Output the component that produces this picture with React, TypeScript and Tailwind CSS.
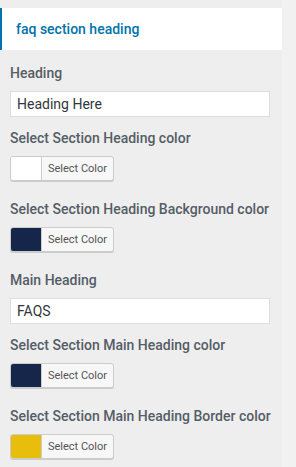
import React from 'react';

type Field =
  | { kind: 'text'; label: string; value: string }
  | { kind: 'color'; label: string; color: string };

const fields: Field[] = [
  { kind: 'text', label: 'Heading', value: 'Heading Here' },
  { kind: 'color', label: 'Select Section Heading color', color: '#ffffff' },
  { kind: 'color', label: 'Select Section Heading Background color', color: '#16264a' },
  { kind: 'text', label: 'Main Heading', value: 'FAQS' },
  { kind: 'color', label: 'Select Section Main Heading color', color: '#16264a' },
  { kind: 'color', label: 'Select Section Main Heading Border color', color: '#e8bd0c' },
];

function ColorButton({ color }: { color: string }) {
  return (
    <button className="flex h-[25px] w-[104px] overflow-hidden rounded-[3px] border border-[#cccccc] bg-[#f7f7f7] p-0 shadow-[0_1px_0_#cccccc]">
      <span className="h-full w-[31px] border-r border-[#cccccc]" style={{ backgroundColor: color }} />
      <span className="flex-1 text-center text-[11px] leading-[23px] text-[#555555]">Select Color</span>
    </button>
  );
}

export default function App() {
  return (
    <div className="flex h-[467px] w-[296px] bg-[#f1f1f1] font-['Roboto',sans-serif]">
      <div className="w-[282px] bg-[#eeeeee] pt-2">
        {/* Section title */}
        <div className="flex h-[42px] items-center border-l-2 border-[#0073aa] bg-white pl-[14px]">
          <h3 className="text-[14px] font-medium text-[#0073aa]">faq section heading</h3>
        </div>

        <div className="px-[10px] pt-[14px]">
          {fields.map((f, i) => (
            <div key={i} className={f.kind === 'text' ? 'mb-[12px]' : 'mb-[19px]'}>
              <label className="mb-[9px] block text-[14px] font-medium leading-[18px] text-[#555d66]">
                {f.label}
              </label>
              {f.kind === 'text' ? (
                <input
                  type="text"
                  defaultValue={f.value}
                  className="block h-[26px] w-[260px] border border-[#dddddd] bg-white px-[6px] text-[14px] text-[#32373c] outline-none"
                />
              ) : (
                <ColorButton color={f.color} />
              )}
            </div>
          ))}
        </div>
      </div>
    </div>
  );
}
